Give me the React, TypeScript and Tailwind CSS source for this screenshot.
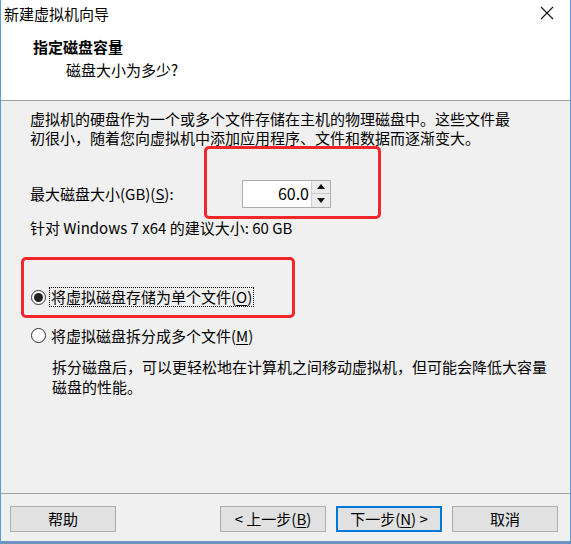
import React from "react";

const font = { fontFamily: '"Noto Sans CJK SC", "Noto Sans", sans-serif' };

function U({ c }: { c: string }) {
  return <span className="underline underline-offset-2">{c}</span>;
}

function Radio({ checked }: { checked: boolean }) {
  return (
    <span className="w-[15px] h-[15px] rounded-full border border-[#333333] bg-white flex items-center justify-center shrink-0">
      {checked && <span className="w-[9px] h-[9px] rounded-full bg-[#222222]" />}
    </span>
  );
}

function Btn({ children, primary }: { children: React.ReactNode; primary?: boolean }) {
  return (
    <div
      className={
        "w-[106px] h-[26px] flex items-center justify-center text-[15px] text-black bg-[#e1e1e1] " +
        (primary ? "border-2 border-[#0078d7]" : "border border-[#adadad]")
      }
    >
      {children}
    </div>
  );
}

export default function App() {
  return (
    <div
      className="w-[571px] h-[544px] flex flex-col bg-white border-l border-r border-[#5b9bd5] relative overflow-hidden text-black"
      style={font}
    >
      {/* Title bar */}
      <div className="h-[26px] flex items-center justify-between pl-[3px] pr-[16px] shrink-0">
        <span className="text-[15px] leading-[19px]">新建虚拟机向导</span>
        <svg width="14" height="14" viewBox="0 0 14 14" className="mt-[-1px]">
          <path d="M1 1 L13 13 M13 1 L1 13" stroke="#111" strokeWidth="1.1" />
        </svg>
      </div>
      {/* Header */}
      <div className="h-[74px] shrink-0 pt-[11px] pl-[32px]">
        <div className="text-[15px] leading-[19px] font-bold">指定磁盘容量</div>
        <div className="text-[15px] leading-[19px] mt-[4px] pl-[33px]">磁盘大小为多少?</div>
      </div>
      <div className="h-px bg-[#a0a0a0] shrink-0" />
      {/* Content */}
      <div className="flex-1 bg-[#f0f0f0] flex flex-col pl-[29px] pt-[8px] text-[15px] leading-[19px]">
        <div>
          虚拟机的硬盘作为一个或多个文件存储在主机的物理磁盘中。这些文件最
          <br />
          初很小，随着您向虚拟机中添加应用程序、文件和数据而逐渐变大。
        </div>
        <div className="relative flex items-center h-[27px] mt-[33px]">
          <span className="w-[212px]">
            最大磁盘大小(GB)(<U c="S" />):
          </span>
          <div className="flex h-[28px] border border-[#abadb3] bg-white">
            <div className="w-[68px] flex items-center justify-end pr-[2px] text-[16px]">60.0</div>
            <div className="w-[19px] flex flex-col border-l border-[#d0d0d0]">
              <div className="flex-1 bg-[#ececec] border-b border-[#c8c8c8] flex items-center justify-center">
                <svg width="8" height="5" viewBox="0 0 8 5">
                  <path d="M0 5 L4 0 L8 5 Z" fill="#111" />
                </svg>
              </div>
              <div className="flex-1 bg-[#ececec] flex items-center justify-center">
                <svg width="8" height="5" viewBox="0 0 8 5">
                  <path d="M0 0 L4 5 L8 0 Z" fill="#111" />
                </svg>
              </div>
            </div>
          </div>
          <div className="absolute left-[174px] top-[-34px] w-[177px] h-[73px] border-[3px] border-[#f0262a] rounded-[5px]" />
        </div>
        <div className="mt-[11px]">针对 Windows 7 x64 的建议大小: 60 GB</div>
        <div className="relative flex items-center h-[20px] mt-[50px] pl-[1px]">
          <Radio checked />
          <span className="ml-[3px] border border-dotted border-black px-[1px] leading-[18px]">
            将虚拟磁盘存储为单个文件(<U c="O" />)
          </span>
          <div className="absolute left-[-9px] top-[-30px] w-[274px] h-[61px] border-[3px] border-[#f0262a] rounded-[5px]" />
        </div>
        <div className="flex items-center h-[20px] mt-[18px] pl-[1px]">
          <Radio checked={false} />
          <span className="ml-[4px] px-[1px]">
            将虚拟磁盘拆分成多个文件(<U c="M" />)
          </span>
        </div>
        <div className="mt-[12px] pl-[22px] leading-[20px]">
          拆分磁盘后，可以更轻松地在计算机之间移动虚拟机，但可能会降低大容量
          <br />
          磁盘的性能。
        </div>
      </div>
      <div className="h-px bg-[#a0a0a0] shrink-0" />
      {/* Footer */}
      <div className="h-[47px] bg-[#f0f0f0] shrink-0 flex items-start pt-[12px] pl-[9px]">
        <Btn>帮助</Btn>
        <div className="ml-[104px]">
          <Btn>
            &lt; 上一步(<U c="B" />)
          </Btn>
        </div>
        <div className="ml-[10px]">
          <Btn primary>
            下一步(<U c="N" />) &gt;
          </Btn>
        </div>
        <div className="ml-[10px]">
          <Btn>取消</Btn>
        </div>
      </div>
      <div className="h-[3px] bg-[#6f93bf] shrink-0" />
    </div>
  );
}
